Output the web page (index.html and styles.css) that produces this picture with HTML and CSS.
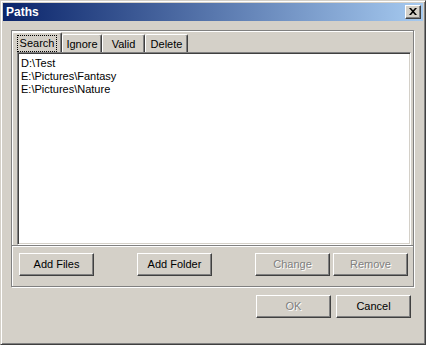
FILE: index.html
```html
<!DOCTYPE html>
<html>
<head>
<meta charset="utf-8">
<link rel="stylesheet" href="styles.css">
</head>
<body>
<div class="window">
  <div class="titlebar">
    <span class="title">Paths</span>
    <span class="close"><svg width="8" height="7" viewBox="0 0 8 7"><path d="M0 0h2l2 2.3L6 0h2L5 3.5 8 7H6L4 4.7 2 7H0l3-3.5z" fill="#000"/></svg></span>
  </div>
  <div class="frame">
    <div class="tabarea">
      <div class="tabs">
        <div class="tab active"><span class="focus">Search</span></div>
        <div class="tab w40">Ignore</div>
        <div class="tab w43">Valid</div>
        <div class="tab w43">Delete</div>
      </div>
      <div class="list">
        <div>D:\Test</div>
        <div>E:\Pictures\Fantasy</div>
        <div>E:\Pictures\Nature</div>
      </div>
    </div>
    <div class="btnrow">
      <button class="btn">Add Files</button>
      <button class="btn gap43">Add Folder</button>
      <button class="btn gap43 disabled">Change</button>
      <button class="btn gap3 disabled">Remove</button>
    </div>
  </div>
  <div class="footer">
    <button class="btn disabled">OK</button>
    <button class="btn gap5">Cancel</button>
  </div>
</div>
</body>
</html>
```
FILE: styles.css
```css
* { box-sizing: border-box; }
html, body { margin: 0; padding: 0; }
body {
  font-family: "Liberation Sans", Arial, sans-serif;
  font-size: 11px;
  color: #000;
  background: #d4d0c8;
}
.window {
  width: 426px;
  height: 345px;
  background: #d4d0c8;
  border: 1px solid;
  border-color: #d4d0c8 #404040 #404040 #d4d0c8;
  box-shadow: inset 1px 1px 0 #fff, inset -1px -1px 0 #808080;
  padding: 2px;
  display: flex;
  flex-direction: column;
}
.titlebar {
  height: 18px;
  background: linear-gradient(to right, #0a246a, #a6caf0);
  display: flex;
  align-items: center;
  justify-content: space-between;
  padding: 0 2px 0 3px;
}
.title {
  color: #fff;
  font-weight: bold;
  font-size: 12px;
  line-height: 18px;
}
.close {
  width: 16px;
  height: 14px;
  background: #d4d0c8;
  border: 1px solid;
  border-color: #fff #404040 #404040 #fff;
  box-shadow: inset -1px -1px 0 #808080;
  display: flex;
  align-items: center;
  justify-content: center;
  padding: 0 1px 1px 0;
}
.close svg { display: block; }
.frame {
  margin: 9px 0 0 8px;
  width: 403px;
  height: 257px;
  border: 1px solid #808080;
  box-shadow: inset 1px 1px 0 #fff, 1px 1px 0 #fff;
  display: flex;
  flex-direction: column;
}
.tabarea {
  padding-top: 1px;
  border-bottom: 1px solid #808080;
  height: 215px;
}
.tabs {
  display: flex;
  align-items: flex-end;
  height: 20px;
}
.tab {
  height: 18px;
  border: 1px solid;
  border-bottom: none;
  border-color: #fff #404040 #404040 #fff;
  box-shadow: inset -1px 0 0 #808080;
  border-radius: 2px 2px 0 0;
  display: flex;
  align-items: center;
  justify-content: center;
  padding-top: 1px;
}
.tab.active {
  width: 50px;
  height: 20px;
}
.w40 { width: 40px; }
.w43 { width: 43px; }
.focus {
  outline: 1px dotted #000;
  padding: 1px 2px 2px;
  line-height: 12px;
}
.list {
  margin-left: 5px;
  width: 394px;
  height: 193px;
  background: #fff;
  border: 1px solid;
  border-color: #808080 #fff #fff #808080;
  box-shadow: inset 1px 1px 0 #404040, inset -1px -1px 0 #d4d0c8;
  padding: 4px 3px;
  line-height: 13px;
}
.btnrow {
  border-top: 1px solid #fff;
  padding: 6px 0 0 7px;
  display: flex;
}
.btn {
  font: inherit;
  color: #000;
  width: 75px;
  height: 23px;
  background: #d4d0c8;
  border: 1px solid;
  border-color: #fff #404040 #404040 #fff;
  box-shadow: inset -1px -1px 0 #808080;
  padding: 0 0 1px 0;
  margin: 0;
}
.btn.disabled {
  color: #808080;
  text-shadow: 1px 1px 0 #fff;
}
.gap43 { margin-left: 43px; }
.gap3 { margin-left: 3px; }
.gap5 { margin-left: 5px; }
.footer {
  display: flex;
  justify-content: flex-end;
  margin-top: 8px;
  padding-right: 12px;
}
```
